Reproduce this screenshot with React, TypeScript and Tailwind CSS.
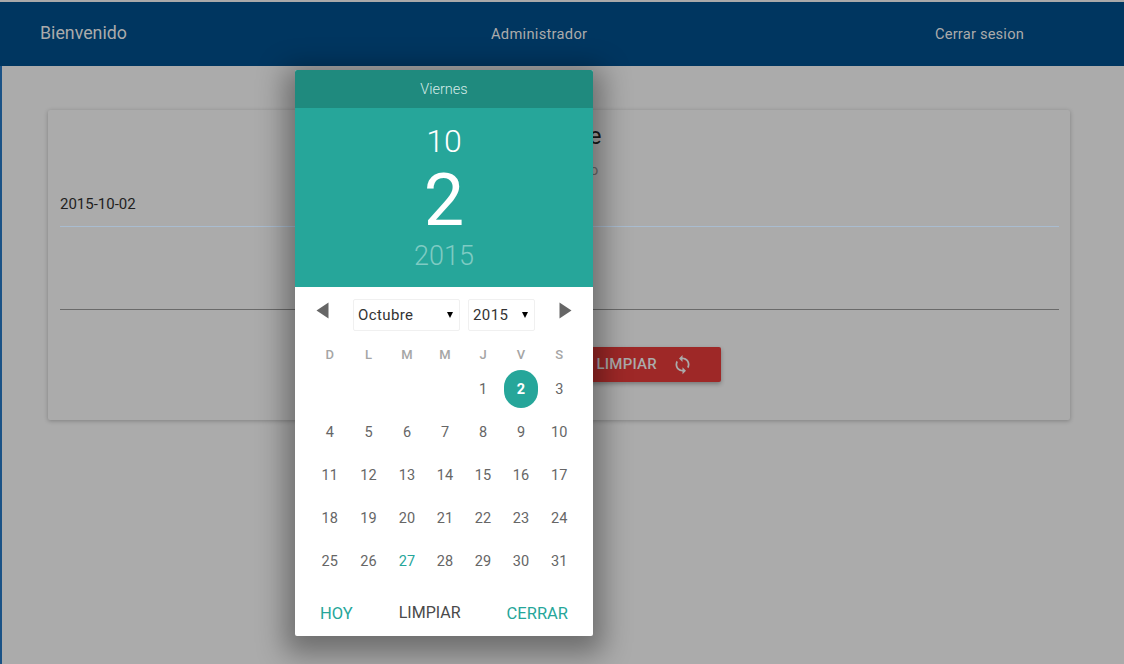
import React from "react";

const weeks: (number | null)[][] = [
  [null, null, null, null, 1, 2, 3],
  [4, 5, 6, 7, 8, 9, 10],
  [11, 12, 13, 14, 15, 16, 17],
  [18, 19, 20, 21, 22, 23, 24],
  [25, 26, 27, 28, 29, 30, 31],
];
const heads = ["D", "L", "M", "M", "J", "V", "S"];
const colX = ["w-[38.5px]", "w-[39px]", "w-[38px]", "w-[38px]", "w-[38px]", "w-[38px]", "w-[38.5px]"];

function Caret({ dir }: { dir: "l" | "r" }) {
  return (
    <svg width="13" height="17" viewBox="0 0 13 17" className="block">
      <path d={dir === "l" ? "M12.5 0.5V16.5L0.5 8.5Z" : "M0.5 0.5V16.5L12.5 8.5Z"} fill="#666666" />
    </svg>
  );
}

function Select({ label, className }: { label: string; className: string }) {
  return (
    <div className={`flex h-[32px] items-center justify-between rounded-[2px] border border-[#f0f0f0] pl-[4px] pr-[6px] text-[15px] tracking-[0.4px] text-[#333333] ${className}`}>
      <span>{label}</span>
      <span className="ml-1 h-0 w-0 border-x-[3px] border-t-[6px] border-x-transparent border-t-black" />
    </div>
  );
}

export default function App() {
  return (
    <div className="relative h-[664px] w-full overflow-hidden bg-[#ababab] font-['Roboto',sans-serif]">
      <div className="h-[2px] bg-[#a9a9a9]" />
      <header className="flex h-[64px] items-center bg-[#003660] text-[#ababab]">
        <div className="-mt-[1px] w-[491px] pl-[40px] text-[17.8px]">Bienvenido</div>
        <div className="w-[444px] text-[14.7px] tracking-[0.28px]">Administrador</div>
        <div className="text-[14.7px] tracking-[0.18px]">Cerrar sesion</div>
      </header>

      <main className="h-[598px] border-l-2 border-[#1a5286] pl-[46px] pr-[54px] pt-[44px]">
        <section className="flex h-[310px] flex-col rounded-[2px] bg-[#ababab] pl-[12px] pr-[11px] shadow-[0_1px_4px_rgba(0,0,0,0.25)]">
          <div className="flex flex-col items-center pt-[11px]">
            <h1 className="text-[24px] leading-[30px] text-[#1a1a1a]">Reporte</h1>
            <p className="mt-[9px] text-[15px] leading-[20px] text-[#6e6e6e]">Por periodo</p>
          </div>
          <div className="mt-[14px] border-b border-[#a9bcd0] pb-[12px] text-[15px] leading-[20px] text-[#1f1f1f]">2015-10-02</div>
          <div className="mt-[82px] border-b border-[#6a6a6a]" />
          <div className="mt-[37px] flex justify-end pr-[338px]">
            <button className="flex h-[35px] w-[160px] items-center justify-end gap-[15px] rounded-[2px] bg-[#9e2827] pr-[28px] text-[15px] font-medium tracking-[0.25px] text-[#ababab] shadow-[0_2px_4px_rgba(0,0,0,0.3)]">
              LIMPIAR
              <svg width="21" height="21" viewBox="0 0 24 24" fill="currentColor" className="block">
                <path d="M12 4V1L8 5l4 4V6c3.31 0 6 2.69 6 6 0 1.01-.25 1.97-.7 2.8l1.46 1.46C19.54 15.03 20 13.57 20 12c0-4.42-3.58-8-8-8zm0 14c-3.31 0-6-2.69-6-6 0-1.01.25-1.97.7-2.8L5.24 7.74C4.46 8.97 4 10.43 4 12c0 4.42 3.58 8 8 8v3l4-4-4-4v3z" />
              </svg>
            </button>
          </div>
        </section>
      </main>

      <div className="absolute left-[295px] top-[70px] flex h-[566px] w-[298px] flex-col overflow-hidden rounded-[2px] bg-white shadow-[0_8px_28px_10px_rgba(0,0,0,0.36)]">
        <div className="flex h-[38px] items-center justify-center bg-[#1f8a7e] pt-[1px] text-[14.5px] font-light text-[#d4ebe8]">Viernes</div>
        <div className="flex h-[179px] flex-col items-center bg-[#26a69a] text-white">
          <div className="mt-[14px] text-[32px] font-light leading-[38px]">10</div>
          <div className="mt-[5px] text-[72px] leading-[72px]">2</div>
          <div className="mt-[2px] text-[27px] font-light leading-[34px] text-[#7fcbc3]">2015</div>
        </div>

        <div className="flex h-[45px] items-center pl-[21px] pr-[21px] pt-[11px]">
          <div className="-mt-[9px]"><Caret dir="l" /></div>
          <Select label="Octubre" className="ml-[24px] w-[107px]" />
          <Select label="2015" className="ml-[8px] w-[67px]" />
          <div className="-mt-[9px] ml-[24px]"><Caret dir="r" /></div>
        </div>

        <div className="mt-[13px] flex pl-[15.5px] text-[13px] font-medium leading-[20px] text-[#a5a5a5]">
          {heads.map((h, i) => (
            <div key={i} className={`${colX[i]} text-center`}>{h}</div>
          ))}
        </div>

        <div className="mt-[6px] flex flex-col gap-[5px] pl-[15.5px] text-[14.5px] text-[#666666]">
          {weeks.map((w, r) => (
            <div key={r} className="flex h-[38px] items-center">
              {w.map((d, i) => (
                <div key={i} className={`${colX[i]} flex justify-center`}>
                  {d === 2 ? (
                    <span className="-mt-[2px] flex h-[38px] w-[34px] items-center justify-center rounded-full bg-[#26a69a] pt-[2px] font-bold text-white">2</span>
                  ) : d === 27 ? (
                    <span className="text-[#26a69a]">27</span>
                  ) : (
                    <span>{d}</span>
                  )}
                </div>
              ))}
            </div>
          ))}
        </div>

        <div className="mt-auto flex h-[34px] items-start justify-between px-[25px] text-[16.5px] leading-[24px]">
          <span className="text-[#26a69a]">HOY</span>
          <span className="-mt-[1px] text-[16px] text-[#4a4a4a]">LIMPIAR</span>
          <span className="text-[#26a69a]">CERRAR</span>
        </div>
      </div>
    </div>
  );
}
